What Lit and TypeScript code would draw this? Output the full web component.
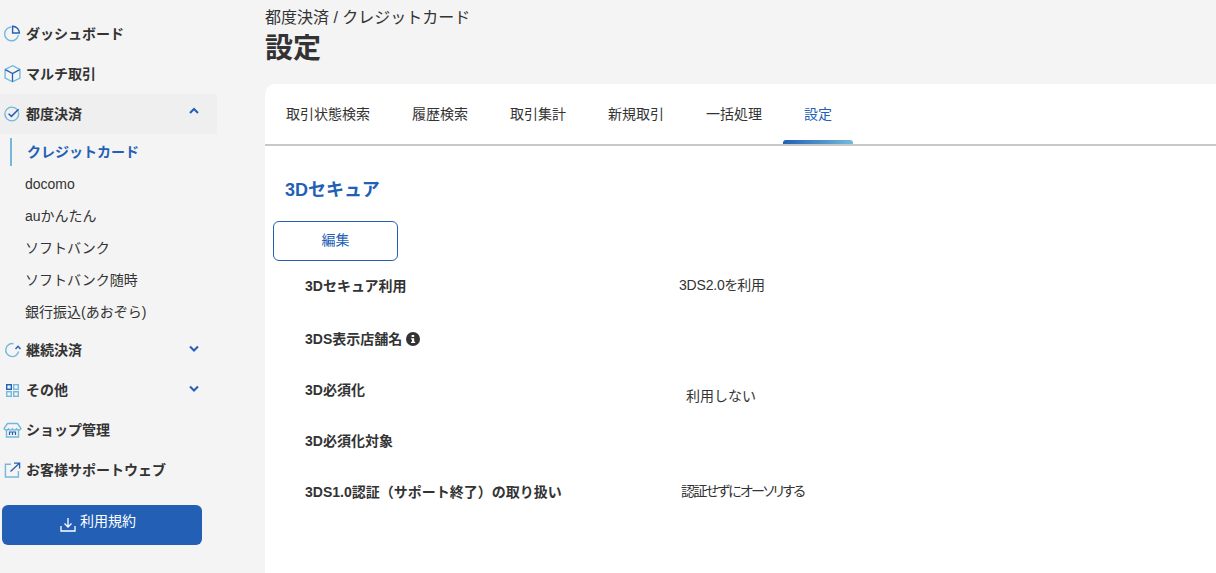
import { LitElement, html, css, svg, unsafeCSS } from "lit";
import { customElement } from "lit/decorators.js";

const D = "#2360b5";
const L = "#74b9dc";
const DC = unsafeCSS(D);
const LC = unsafeCSS(L);

const icons: Record<string, unknown> = {
  clock: svg`<path d="M8.3 3A6.9 6.9 0 1 0 15.4 11" fill="none" stroke="${L}" stroke-width="1.4"/><path d="M9.6 2.2V9H16.4A6.9 6.9 0 0 0 9.6 2.2Z" fill="none" stroke="${D}" stroke-width="1.4"/>`,
  box: svg`<path d="M9.5 1.7L16.9 5.5V14L9.5 17.8L2.1 14V5.5Z" fill="none" stroke="${L}" stroke-width="1.4"/><path d="M2.3 5.6L9.5 9.6L16.7 5.6M9.5 9.6V17.6" fill="none" stroke="${D}" stroke-width="1.3"/>`,
  check: svg`<circle cx="8.8" cy="10" r="6.9" fill="none" stroke="${L}" stroke-width="1.4"/><path d="M5.6 9.8L8.4 12.4L15.6 5.2" fill="none" stroke="${D}" stroke-width="1.5"/>`,
  cycle: svg`<path d="M15.6 11.5A6.5 6.5 0 1 1 10.5 3.7" fill="none" stroke="${L}" stroke-width="1.4"/><path d="M12.5 9L15 6.2L17.5 9" fill="none" stroke="${D}" stroke-width="1.4"/>`,
  grid: svg`<g fill="none" stroke-width="1.4"><rect x="3.7" y="4.7" width="4.6" height="4.6" stroke="${D}"/><rect x="10.7" y="4.7" width="4.6" height="4.6" stroke="${L}"/><rect x="3.7" y="11.7" width="4.6" height="4.6" stroke="${L}"/><rect x="10.7" y="11.7" width="4.6" height="4.6" stroke="${L}"/></g>`,
  shop: svg`<path d="M3.5 10V17H15.5V10" fill="none" stroke="${L}" stroke-width="1.4"/><path d="M4.5 3.5H14.5L18 8.5C17 10.5 14.5 10.5 13.5 9C12.5 10.5 10.5 10.5 9.5 9C8.5 10.5 6.5 10.5 5.5 9C4.5 10.5 2 10.5 1 8.5Z" fill="none" stroke="${L}" stroke-width="1.4"/><path d="M6.5 15V12H12.5V15M9.5 12V15" fill="none" stroke="${D}" stroke-width="1.2"/>`,
  ext: svg`<path d="M8 4.3H2.4V17H15.4V11" fill="none" stroke="${L}" stroke-width="1.4"/><path d="M7.5 11.5L16.4 3.2M11 3.2H16.6V8.5" fill="none" stroke="${D}" stroke-width="1.3"/>`,
};

function icon(name: string) {
  return html`<svg class="ico" width="19" height="20" viewBox="0 0 19 20">${icons[name]}</svg>`;
}

const chev = (up: boolean) => html`<svg class="chev ${up ? "up" : ""}" width="10" height="7" viewBox="0 0 10 7"><path d="${up ? "M1 6L5 2L9 6" : "M1 1.5L5 5.5L9 1.5"}" fill="none" stroke="${D}" stroke-width="2"/></svg>`;

@customElement("app-root")
export class AppRoot extends LitElement {
  static styles = css`
    :host { display: block; width: 1216px; height: 573px; overflow: hidden; background: #f4f4f4; color: #333;
      font-family: "Liberation Sans", "Noto Sans CJK JP", sans-serif; }
    .page { display: flex; height: 573px; }
    .side { width: 265px; flex: none; padding-top: 14px; box-sizing: border-box; }
    .nav { display: flex; align-items: center; height: 40px; width: 217px; padding-left: 3px; box-sizing: border-box;
      font-size: 14px; font-weight: 700; color: #333; gap: 4px; }
    .nav span { padding-bottom: 2px; }
    .nav.open { background: #efefef; }
    .ico { flex: none; }
    .chev { margin-left: auto; margin-right: 18px; margin-top: -4px; }
    .chev.up { margin-top: -8px; }
    .subs { display: flex; flex-direction: column; padding: 2px 0; }
    .sub { height: 32px; display: flex; align-items: center; padding-left: 25px; padding-bottom: 2px; box-sizing: border-box; font-size: 14px; color: #333; }
    .sub.latin { padding-bottom: 0; }
    .sub.cur { margin-left: 10px; padding-left: 17px; font-weight: 700; color: ${DC}; position: relative; }
    .sub.cur::before { content: ""; position: absolute; left: 0; top: 2px; bottom: 2px; width: 2px; background: ${LC}; }
    .terms { display: flex; align-items: center; justify-content: center; gap: 4px; width: 200px; height: 40px; margin: 15px 0 0 2px;
      background: ${DC}; color: #fff; border-radius: 6px; font-size: 14px; padding-right: 8px; box-sizing: border-box; }
    .terms span { padding-bottom: 10px; }
    .terms svg { margin-top: -2px; }
    .main { flex: 1; min-width: 0; }
    .crumb { font-size: 16px; line-height: 20px; padding-top: 8px; color: #333; }
    h1 { margin: 0; font-size: 28px; line-height: 42px; font-weight: 700; color: #333; height: 56px; }
    .card { background: #fff; border-top-left-radius: 10px; height: 489px; }
    .tabs { display: flex; height: 62px; box-sizing: border-box; border-bottom: 2px solid #c8c8c8; }
    .tab { position: relative; padding: 0 21px; font-size: 14px; line-height: 60px; color: #333; }
    .tab.on { color: ${DC}; }
    .tab.on::after { content: ""; position: absolute; left: 0; right: 0; bottom: 0; height: 4px; border-radius: 3px 3px 0 0;
      background: linear-gradient(90deg, ${DC}, ${LC}); }
    h2 { margin: 0; padding: 30px 0 0 20px; font-size: 18px; line-height: 28px; font-weight: 700; color: ${DC}; }
    .edit { display: flex; align-items: center; justify-content: center; width: 125px; height: 40px; box-sizing: border-box; margin: 17px 0 0 8px;
      border: 1px solid ${DC}; border-radius: 6px; color: ${DC}; font-size: 14px; padding-bottom: 4px; }
    .rows { padding: 0 0 0 40px; margin-top: -1px; }
    .row { display: grid; grid-template-columns: 374px 1fr; height: 51px; padding-top: 16px; box-sizing: border-box; font-size: 14px; line-height: 20px; }
    .row.first { height: 53px; }
    .row b { display: flex; align-items: center; gap: 4px; height: 20px; }
    .v2 { padding-left: 7px; padding-top: 6px; }
    .v3 { padding-left: 2px; margin-top: -1px; font-feature-settings: "palt"; letter-spacing: -1.8px; }
    .v1 { margin-top: -1px; font-feature-settings: "palt"; letter-spacing: -0.2px; }
    .info { flex: none; }
  `;

  render() {
    const tabs = ["取引状態検索", "履歴検索", "取引集計", "新規取引", "一括処理", "設定"];
    return html`<div class="page">
      <aside class="side">
        <div class="nav">${icon("clock")}<span>ダッシュボード</span></div>
        <div class="nav">${icon("box")}<span>マルチ取引</span></div>
        <div class="nav open">${icon("check")}<span>都度決済</span>${chev(true)}</div>
        <div class="subs">
          <div class="sub cur">クレジットカード</div>
          <div class="sub latin">docomo</div>
          <div class="sub">auかんたん</div>
          <div class="sub">ソフトバンク</div>
          <div class="sub">ソフトバンク随時</div>
          <div class="sub">銀行振込(あおぞら)</div>
        </div>
        <div class="nav">${icon("cycle")}<span>継続決済</span>${chev(false)}</div>
        <div class="nav">${icon("grid")}<span>その他</span>${chev(false)}</div>
        <div class="nav">${icon("shop")}<span>ショップ管理</span></div>
        <div class="nav">${icon("ext")}<span>お客様サポートウェブ</span></div>
        <div class="terms">
          <svg width="16" height="16" viewBox="0 0 16 16"><path d="M1 10V15H15V10M8 2V11M4.5 7.5L8 11L11.5 7.5" fill="none" stroke="#fff" stroke-width="1.3"/></svg>
          <span>利用規約</span>
        </div>
      </aside>
      <main class="main">
        <div class="crumb">都度決済 / クレジットカード</div>
        <h1>設定</h1>
        <section class="card">
          <nav class="tabs">
            ${tabs.map((t, i) => html`<div class="tab ${i === 5 ? "on" : ""}">${t}</div>`)}
          </nav>
          <h2>3Dセキュア</h2>
          <div class="edit">編集</div>
          <div class="rows">
            <div class="row first"><b>3Dセキュア利用</b><span class="v1">3DS2.0を利用</span></div>
            <div class="row"><b>3DS表示店舗名
              <svg class="info" width="14" height="14" viewBox="0 0 14 14"><circle cx="7" cy="7" r="7" fill="#333"/><rect x="5.6" y="3" width="2.6" height="2" fill="#fff"/><path d="M5 6.2H8.2V9.8H9.2V11H5V9.8H6V7.4H5Z" fill="#fff"/></svg></b><span></span></div>
            <div class="row"><b>3D必須化</b><span class="v2">利用しない</span></div>
            <div class="row"><b>3D必須化対象</b><span></span></div>
            <div class="row"><b>3DS1.0認証（サポート終了）の取り扱い</b><span class="v3">認証せずにオーソリする</span></div>
          </div>
        </section>
      </main>
    </div>`;
  }
}
